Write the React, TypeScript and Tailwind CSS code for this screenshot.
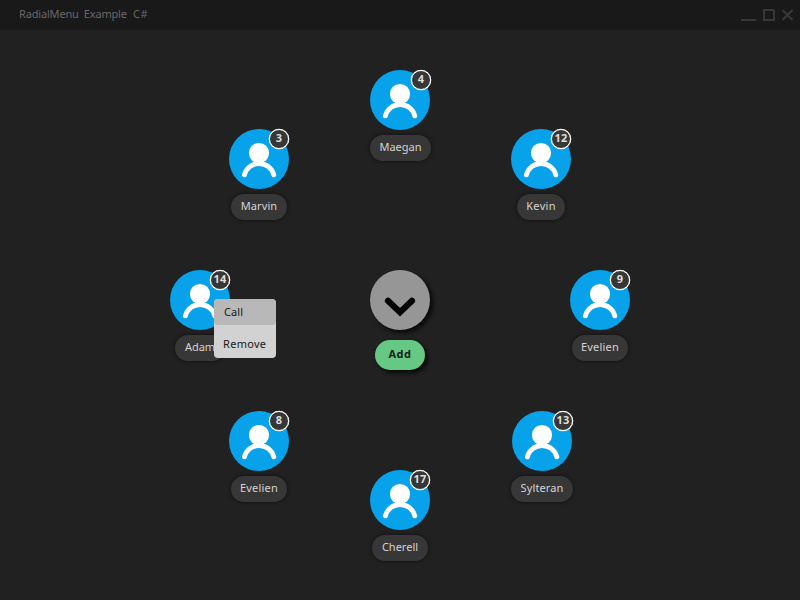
import React from "react";

type Contact = {
  name: string;
  count: number;
  place: string;
  badge: string;
  label: string;
};

const contacts: Contact[] = [
  { name: "Maegan", count: 4, place: "left-[370px] top-[40px]", badge: "-right-px", label: "ml-0 w-[61px]" },
  { name: "Kevin", count: 12, place: "left-[511px] top-[99px]", badge: "right-0", label: "ml-[6px] w-[48px] tracking-[0.3px]" },
  { name: "Evelien", count: 9, place: "left-[570px] top-[240px]", badge: "right-0", label: "ml-[2px] w-[56px] tracking-[0.2px]" },
  { name: "Sylteran", count: 13, place: "left-[512px] top-[381px]", badge: "-right-px", label: "-ml-px w-[62px] tracking-[0.1px]" },
  { name: "Cherell", count: 17, place: "left-[370px] top-[440px]", badge: "right-0", label: "ml-[2px] w-[56px]" },
  { name: "Evelien", count: 8, place: "left-[229px] top-[381px]", badge: "right-0", label: "ml-[2px] w-[56px] tracking-[0.2px]" },
  { name: "Adam", count: 14, place: "left-[170px] top-[240px]", badge: "right-0", label: "ml-[5px] w-[50px]" },
  { name: "Marvin", count: 3, place: "left-[229px] top-[99px]", badge: "right-0", label: "ml-[2px] w-[56px] tracking-[0.1px]" },
];

function ContactNode({ name, count, place, badge, label }: Contact) {
  return (
    <div className={`absolute flex w-[60px] flex-col gap-[5px] ${place}`}>
      <svg className="block h-[60px] w-[60px]" viewBox="0 0 60 60">
        <circle cx="30" cy="30" r="30" fill="#07a2e9" />
        <circle cx="30" cy="24" r="10.1" fill="white" />
        <path d="M15.4 45.8A15.2 15.2 0 0 1 44.8 45.8" fill="none" stroke="white" strokeWidth="4.9" strokeLinecap="round" />
      </svg>
      <div className={`absolute top-0 flex h-5 w-5 items-center justify-center rounded-full border border-white bg-[#373737] pb-[4px] text-[11px] leading-none font-bold tracking-[0.2px] text-[#dedede] shadow-[0_0_0_0.3px_white] ${badge}`}>
        {count}
      </div>
      <div className={`flex h-[26px] shrink-0 items-center justify-center rounded-full bg-[#373737] pb-[4px] text-[11px] leading-none text-[#d4d4d4] shadow-[0_0_4px_rgba(0,0,0,0.55)] ${label}`}>
        {name}
      </div>
    </div>
  );
}

export default function App() {
  return (
    <div className="flex h-[600px] w-[800px] flex-col overflow-hidden bg-[#212121] font-['Noto_Sans','Open_Sans',sans-serif]">
      <header className="flex h-[30px] items-center justify-between bg-[#191919] pl-[19px] text-[11px] leading-none text-[#686868]">
        <span className="pb-[3px] tracking-[-0.17px] [word-spacing:2.4px]">
          RadialMenu Example <span className="pl-px tracking-[0.6px]">C#</span>
        </span>
        <svg className="h-[30px] w-[60px]" viewBox="0 0 60 30" fill="none" stroke="#373737" strokeWidth="2">
          <path d="M1 20H16" />
          <path d="M24 10H34V20H24Z" />
          <path d="M42.5 10L52.5 20M52.5 10L42.5 20" strokeWidth="2.2" />
        </svg>
      </header>
      <main className="relative flex flex-1 flex-col items-center gap-[10px] pt-[240px]">
        {contacts.map((c) => (
          <ContactNode key={c.place} {...c} />
        ))}
        <button className="h-[60px] w-[60px] rounded-full bg-[#969696] shadow-[3px_3px_4px_rgba(0,0,0,0.75)]">
          <svg className="block h-[60px] w-[60px]" viewBox="0 0 60 60">
            <path d="M18 30.8L30 42.2L42 30.8" fill="none" stroke="black" strokeWidth="6.2" strokeLinecap="round" strokeLinejoin="miter" />
          </svg>
        </button>
        <button className="flex h-[30px] w-[50px] items-center justify-center rounded-full bg-[#66c983] pb-[4px] text-[11px] leading-none font-bold tracking-[0.5px] text-[#152019] shadow-[3px_3px_4px_rgba(0,0,0,0.75)]">
          Add
        </button>
        <div className="absolute left-[214px] top-[269px] flex h-[59px] w-[62px] flex-col gap-[6px] overflow-hidden rounded bg-[#d2d2d2] text-[11px] leading-none text-[#191919]">
          <div className="flex h-[26px] items-center rounded bg-[#b8b8b8] pb-[2px] pl-[10px] tracking-[0.1px]">Call</div>
          <div className="flex h-[26px] items-center pb-[2px] pl-[9px] tracking-[0.3px]">Remove</div>
        </div>
      </main>
    </div>
  );
}
